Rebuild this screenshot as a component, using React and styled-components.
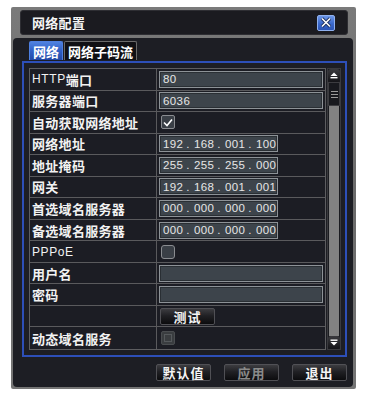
import React from "react";
import styled, { createGlobalStyle } from "styled-components";

const Global = createGlobalStyle`
  html, body { margin: 0; padding: 0; background: #ffffff; }
  body { font-family: "Noto Sans CJK SC", "Liberation Sans", sans-serif; }
  * { box-sizing: border-box; }
`;

const Page = styled.div`
  padding: 7px 0 0 11px;
`;

const Frame = styled.div`
  width: 345px;
  height: 382px;
  background: linear-gradient(180deg, #7a7a7a 0%, #6a6a6a 50%, #757575 100%);
  border-radius: 2px;
  padding: 3px 3px 2px 2px;
  display: flex;
  flex-direction: column;
  gap: 3px;
`;

const TitleBar = styled.div`
  margin: 0 5px 0 7px;
  height: 25px;
  background: #1b1b20;
  border: 1px solid #2e2e33;
  border-radius: 3px;
  display: flex;
  align-items: center;
  justify-content: space-between;
  padding: 0 12px 0 11px;
`;

const Title = styled.span`
  color: #f4f4f4;
  font-weight: 700;
  font-size: 13px;
  letter-spacing: 0.3px;
`;

const CloseBtn = styled.div`
  width: 18px;
  height: 16px;
  border-radius: 2px;
  border: 1px solid #8fb0ee;
  background: linear-gradient(180deg, #6c96e6 0%, #3a68cc 55%, #2c55b4 100%);
  display: flex;
  align-items: center;
  justify-content: center;
`;

const Body = styled.div`
  flex: 1;
  background: #1d1e24;
  border-radius: 4px;
  padding: 3px 6px 0 9px;
  display: flex;
  flex-direction: column;
`;

const Tabs = styled.div`
  display: flex;
  gap: 1px;
  margin-left: 7px;
  height: 19px;
`;

const Tab = styled.div`
  height: 19px;
  padding: 0 ${(p) => (p.$active ? "3px" : "3px")};
  display: flex;
  align-items: center;
  font-size: 13px;
  font-weight: 700;
  color: #ffffff;
  border-radius: 2px 2px 0 0;
  border: 1px solid ${(p) => (p.$active ? "#4d7fe0" : "#6a6a6a")};
  border-bottom: none;
  background: ${(p) =>
    p.$active
      ? "linear-gradient(180deg, #4f82e0 0%, #2f5fc4 50%, #2149a6 100%)"
      : "#101014"};
`;

const BlueFrame = styled.div`
  margin-top: 1px;
  height: 296px;
  border: 2px solid #2d4fb8;
  padding: 5px 4px 5px 5px;
  display: flex;
  gap: 1px;
`;

const Table = styled.div`
  width: 297px;
  height: 282px;
  border: 1px solid #5d5d60;
  display: grid;
  grid-template-rows: repeat(13, 1fr);
`;

const Row = styled.div`
  display: grid;
  grid-template-columns: 127px 1fr;
  border-bottom: ${(p) => (p.$last ? "none" : "1px solid #5a5a5d")};
  background: #1c1d24;
`;

const Label = styled.div`
  border-right: 1px solid #5a5a5d;
  display: flex;
  align-items: center;
  padding-left: 2px;
  color: #f2f2f2;
  font-size: 13px;
  font-weight: 700;
  letter-spacing: 0.3px;
  white-space: nowrap;
`;

const Latin = styled.span`
  font-family: "Liberation Sans", sans-serif;
  font-weight: 400;
  font-size: 12px;
  letter-spacing: 0.6px;
`;

const Value = styled.div`
  display: flex;
  align-items: center;
  padding-left: 2px;
`;

const Input = styled.div`
  width: ${(p) => p.$w}px;
  height: 17px;
  background: #3d444b;
  border: 1px solid #8d9297;
  box-shadow: inset 0 0 0 1px #2a2f34;
  display: flex;
  align-items: center;
  padding-left: 3px;
  color: #e6e6e6;
  font-family: "Liberation Sans", sans-serif;
  font-size: 11.5px;
  letter-spacing: 0.4px;
`;

const Seg = styled.span`
  width: 19px;
  text-align: center;
`;

const Dot = styled.span`
  width: 12px;
  text-align: center;
`;

const Check = styled.div`
  width: 14px;
  height: 14px;
  margin-left: 2px;
  border-radius: ${(p) => (p.$round ? "3px" : "2px")};
  border: 1px solid ${(p) => (p.$disabled ? "#4a4d50" : "#8a8c90")};
  background: ${(p) => (p.$disabled ? "#3a3d40" : "#3a3f46")};
  display: flex;
  align-items: center;
  justify-content: center;
`;

const InnerBox = styled.div`
  width: 8px;
  height: 8px;
  border: 1px solid #55595c;
`;

const Btn = styled.div`
  width: 55px;
  height: 17px;
  border: 1px solid #505055;
  border-radius: 2px;
  background: linear-gradient(180deg, #3c3c40 0%, #202024 45%, #0c0c0e 100%);
  display: flex;
  align-items: center;
  justify-content: center;
  color: ${(p) => (p.$disabled ? "#8a8a8a" : "#f4f4f4")};
  font-size: 13px;
  font-weight: 700;
  letter-spacing: 1px;
`;

const TestBtn = styled(Btn)`
  margin-left: 1px;
`;

const Scroll = styled.div`
  width: 14px;
  height: 282px;
  display: flex;
  flex-direction: column;
  background: #1a1b20;
  border: 1px solid #3a3a3e;
`;

const Arrow = styled.div`
  height: 13px;
  background: linear-gradient(180deg, #3a3a3e 0%, #141418 100%);
  border-radius: 3px;
  display: flex;
  align-items: center;
  justify-content: center;
`;

const Thumb = styled.div`
  height: 24px;
  background: #18191e;
  border: 1px solid #3c3c40;
  display: flex;
  flex-direction: column;
  align-items: center;
  justify-content: center;
  gap: 2px;
`;

const Grip = styled.div`
  width: 7px;
  height: 1px;
  background: #9a9a9a;
`;

const Track = styled.div`
  flex: 1;
  background: #828282;
  margin: 0 1px;
`;

const ButtonRow = styled.div`
  margin-top: 7px;
  display: flex;
  justify-content: flex-end;
  gap: 13px;
`;

const Ip = ({ v }) => {
  const parts = v.split(".");
  return (
    <Input $w={119}>
      {parts.map((p, i) => (
        <React.Fragment key={i}>
          {i > 0 && <Dot>.</Dot>}
          <Seg>{p}</Seg>
        </React.Fragment>
      ))}
    </Input>
  );
};

const CheckMark = () => (
  <svg width="10" height="9" viewBox="0 0 10 9">
    <path d="M1 4.5 L4 7.5 L9 1.5" stroke="#ffffff" strokeWidth="1.6" fill="none" />
  </svg>
);

export default function App() {
  return (
    <>
      <Global />
      <Page>
        <Frame>
          <TitleBar>
            <Title>网络配置</Title>
            <CloseBtn>
              <svg width="12" height="11" viewBox="0 0 12 11">
                <path d="M2 1.5 L10 9.5 M10 1.5 L2 9.5" stroke="#1a2c5a" strokeWidth="3.2" />
                <path d="M2 1.5 L10 9.5 M10 1.5 L2 9.5" stroke="#ffffff" strokeWidth="1.6" />
              </svg>
            </CloseBtn>
          </TitleBar>
          <Body>
            <Tabs>
              <Tab $active>网络</Tab>
              <Tab>网络子码流</Tab>
            </Tabs>
            <BlueFrame>
              <Table>
                <Row>
                  <Label><Latin>HTTP</Latin>端口</Label>
                  <Value><Input $w={164}>80</Input></Value>
                </Row>
                <Row>
                  <Label>服务器端口</Label>
                  <Value><Input $w={164}>6036</Input></Value>
                </Row>
                <Row>
                  <Label>自动获取网络地址</Label>
                  <Value><Check><CheckMark /></Check></Value>
                </Row>
                <Row>
                  <Label>网络地址</Label>
                  <Value><Ip v="192.168.001.100" /></Value>
                </Row>
                <Row>
                  <Label>地址掩码</Label>
                  <Value><Ip v="255.255.255.000" /></Value>
                </Row>
                <Row>
                  <Label>网关</Label>
                  <Value><Ip v="192.168.001.001" /></Value>
                </Row>
                <Row>
                  <Label>首选域名服务器</Label>
                  <Value><Ip v="000.000.000.000" /></Value>
                </Row>
                <Row>
                  <Label>备选域名服务器</Label>
                  <Value><Ip v="000.000.000.000" /></Value>
                </Row>
                <Row>
                  <Label><Latin>PPPoE</Latin></Label>
                  <Value><Check $round /></Value>
                </Row>
                <Row>
                  <Label>用户名</Label>
                  <Value><Input $w={164} /></Value>
                </Row>
                <Row>
                  <Label>密码</Label>
                  <Value><Input $w={164} /></Value>
                </Row>
                <Row>
                  <Label />
                  <Value><TestBtn>测试</TestBtn></Value>
                </Row>
                <Row $last>
                  <Label>动态域名服务</Label>
                  <Value><Check $disabled><InnerBox /></Check></Value>
                </Row>
              </Table>
              <Scroll>
                <Arrow>
                  <svg width="8" height="7" viewBox="0 0 8 7">
                    <path d="M4 0.5 L7.5 4 L0.5 4 Z" fill="#ffffff" />
                    <rect x="0.5" y="5" width="7" height="1.4" fill="#ffffff" />
                  </svg>
                </Arrow>
                <Thumb>
                  <Grip />
                  <Grip />
                  <Grip />
                </Thumb>
                <Track />
                <Arrow>
                  <svg width="8" height="7" viewBox="0 0 8 7">
                    <rect x="0.5" y="0.5" width="7" height="1.4" fill="#ffffff" />
                    <path d="M0.5 3 L7.5 3 L4 6.5 Z" fill="#ffffff" />
                  </svg>
                </Arrow>
              </Scroll>
            </BlueFrame>
            <ButtonRow>
              <Btn>默认值</Btn>
              <Btn $disabled>应用</Btn>
              <Btn>退出</Btn>
            </ButtonRow>
          </Body>
        </Frame>
      </Page>
    </>
  );
}
